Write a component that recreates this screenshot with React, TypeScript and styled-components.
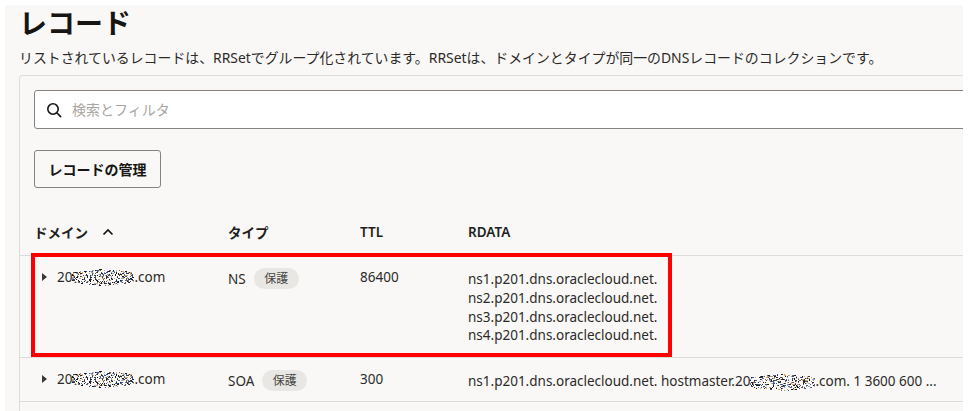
import React from 'react';
import styled, { createGlobalStyle } from 'styled-components';

const GlobalStyle = createGlobalStyle`
  html, body {
    margin: 0;
    padding: 0;
    height: 411px;
    overflow: hidden;
    background: #fff;
  }
  * {
    box-sizing: border-box;
  }
`;

// モザイク処理されたドメイン名の点
const speckColors = ['#1a1816', '#4f6a94', '#c9a26d', '#2f5596', '#5f5a55', '#1f1e1c', '#8fa4c2', '#d8ab76', '#fff', '#3a3835'];

function Masked({ width = 62 }: { width?: number }) {
  const specks = [];
  let seed = 37;
  for (let i = 0; i < width * 7; i++) {
    seed = (seed * 73 + 41) % 1009;
    const x = (seed * 7 + i * 3) % width;
    seed = (seed * 73 + 41) % 1009;
    const spread = 8.5 - (Math.abs(x - width / 2) / (width / 2)) * 3.5;
    const y = 10 + (((seed + i * 11) % 100) / 100 - 0.5) * 2 * spread;
    seed = (seed * 73 + 41) % 1009;
    specks.push(
      <rect
        key={i}
        x={x}
        y={Math.round(y)}
        width={i % 4 === 0 ? 2 : 1}
        height={1}
        fill={speckColors[(seed + i) % speckColors.length]}
      />
    );
  }
  return (
    <MaskedSvg width={width} height={20} viewBox={`0 0 ${width} 20`}>
      {specks}
    </MaskedSvg>
  );
}

function Domain() {
  return (
    <DomainName>
      20
      <Masked />
      .com
    </DomainName>
  );
}

function App() {
  return (
    <>
      <GlobalStyle />
      <Page>
        <Title>レコード</Title>
        <Description>
          リストされているレコードは、RRSetでグループ化されています。RRSetは、ドメインとタイプが同一のDNSレコードのコレクションです。
        </Description>
        <Card>
          <SearchBox>
            <svg width="16" height="16" viewBox="0 0 16 16" fill="none" stroke="#161513" strokeWidth="1.6">
              <circle cx="7" cy="7" r="5.2" />
              <path d="M10.8 10.8 14.6 14.6" strokeLinecap="round" />
            </svg>
            <SearchPlaceholder>検索とフィルタ</SearchPlaceholder>
          </SearchBox>
          <ManageButton>レコードの管理</ManageButton>
          <TableArea>
            <HeaderRow>
              <HeaderCell>
                ドメイン
                <svg width="12" height="8" viewBox="0 0 12 8" fill="none" stroke="#161513" strokeWidth="1.7">
                  <path d="M1.5 6.5 6 2l4.5 4.5" />
                </svg>
              </HeaderCell>
              <HeaderCell>タイプ</HeaderCell>
              <HeaderCell>TTL</HeaderCell>
              <HeaderCell>RDATA</HeaderCell>
            </HeaderRow>
            <BodyRow $tall>
              <DomainCell>
                <Caret />
                <Domain />
              </DomainCell>
              <TypeCell>
                NS
                <Badge>保護</Badge>
              </TypeCell>
              <TtlCell>86400</TtlCell>
              <RdataCell>
                <div>ns1.p201.dns.oraclecloud.net.</div>
                <div>ns2.p201.dns.oraclecloud.net.</div>
                <div>ns3.p201.dns.oraclecloud.net.</div>
                <div>ns4.p201.dns.oraclecloud.net.</div>
              </RdataCell>
            </BodyRow>
            <BodyRow>
              <DomainCell>
                <Caret />
                <Domain />
              </DomainCell>
              <TypeCell>
                SOA
                <Badge>保護</Badge>
              </TypeCell>
              <TtlCell>300</TtlCell>
              <RdataCell>
                <RdataLine>
                  ns1.p201.dns.oraclecloud.net. hostmaster.20
                  <Masked width={65} />
                  .com. 1 3600 600 ...
                </RdataLine>
              </RdataCell>
            </BodyRow>
            <Highlight />
          </TableArea>
        </Card>
      </Page>
    </>
  );
}

export default App;

const fontStack = `"Liberation Sans", "Noto Sans CJK JP", sans-serif`;
const textFont = `"Noto Sans", "Noto Sans CJK JP", sans-serif`;

const Page = styled.div`
  margin: 5px 0 0 5px;
  width: 958px;
  height: 406px;
  overflow: hidden;
  background: #faf8f6;
  padding-left: 14px;
  color: #161513;
  font-family: ${textFont};
`;

const Title = styled.h1`
  margin: 0;
  height: 38px;
  padding-top: 1px;
  font-family: ${fontStack};
  font-size: 28px;
  line-height: 38px;
  font-weight: 700;
`;

const Description = styled.p`
  margin: 5px 0 0;
  height: 27px;
  font-size: 13.9px;
  line-height: 20px;
  white-space: nowrap;
  color: #2b2a28;
`;

const Card = styled.div`
  width: 1000px;
  height: 340px;
  padding: 14px 0 0 14px;
  border-top: 1px solid #dfdcd8;
  border-left: 1px solid #dfdcd8;
  border-top-left-radius: 4px;
`;

const SearchBox = styled.div`
  display: flex;
  align-items: center;
  gap: 10px;
  height: 39px;
  padding-left: 11px;
  background: #fff;
  border: 1px solid #86837f;
  border-radius: 3px;
`;

const SearchPlaceholder = styled.span`
  padding-bottom: 2px;
  font-size: 14px;
  color: #a8a5a1;
`;

const ManageButton = styled.button`
  display: block;
  margin-top: 21px;
  width: 127px;
  height: 38px;
  padding: 0;
  background: transparent;
  border: 1px solid #86837f;
  border-radius: 3px;
  color: #161513;
  font-family: ${fontStack};
  font-size: 14px;
  font-weight: 700;
`;

const TableArea = styled.div`
  position: relative;
  margin-left: -14px;
`;

const Row = styled.div`
  display: grid;
  grid-template-columns: 208px 132px 108px 1fr;
  border-bottom: 1px solid #dfdcd8;
`;

const HeaderRow = styled(Row)`
  height: 68px;
  padding-top: 34px;
`;

const HeaderCell = styled.div`
  display: flex;
  align-items: center;
  gap: 14px;
  height: 20px;
  font-size: 13.5px;
  font-weight: 600;
  color: #201f1d;

  &:first-child {
    padding-left: 14px;
  }
`;

const BodyRow = styled(Row)<{ $tall?: boolean }>`
  height: ${(p) => (p.$tall ? '102px' : '44px')};
  padding-top: 12px;
  font-size: 13.5px;
  line-height: 18px;
  color: #2b2a28;
`;

const DomainCell = styled.div`
  display: flex;
  align-items: flex-start;
  padding-left: 22px;
`;

const Caret = styled.span`
  flex: none;
  width: 0;
  height: 0;
  margin-top: 5px;
  margin-right: 10px;
  border-top: 4px solid transparent;
  border-bottom: 4px solid transparent;
  border-left: 5px solid #3b3936;
`;

const DomainName = styled.div`
  display: flex;
  align-items: center;
  height: 18px;
`;

const MaskedSvg = styled.svg`
  flex: none;
  margin: -1px 0;
`;

const TypeCell = styled.div`
  display: flex;
  align-items: flex-start;
  gap: 8px;
  padding-top: 2px;
`;

const Badge = styled.span`
  display: inline-block;
  width: 45px;
  height: 21px;
  margin-top: -2px;
  border-radius: 11px;
  background: #e9e7e4;
  color: #4a4845;
  font-size: 12px;
  line-height: 21px;
  text-align: center;
`;

const TtlCell = styled.div``;

const RdataCell = styled.div`
  padding-top: 2.3px;
  line-height: 18.7px;
`;

const RdataLine = styled.div`
  display: flex;
  align-items: center;
  height: 19px;
  white-space: pre;
`;

const Highlight = styled.div`
  position: absolute;
  left: 11px;
  top: 65px;
  width: 641px;
  height: 104px;
  border: 4px solid #f00;
  pointer-events: none;
`;
